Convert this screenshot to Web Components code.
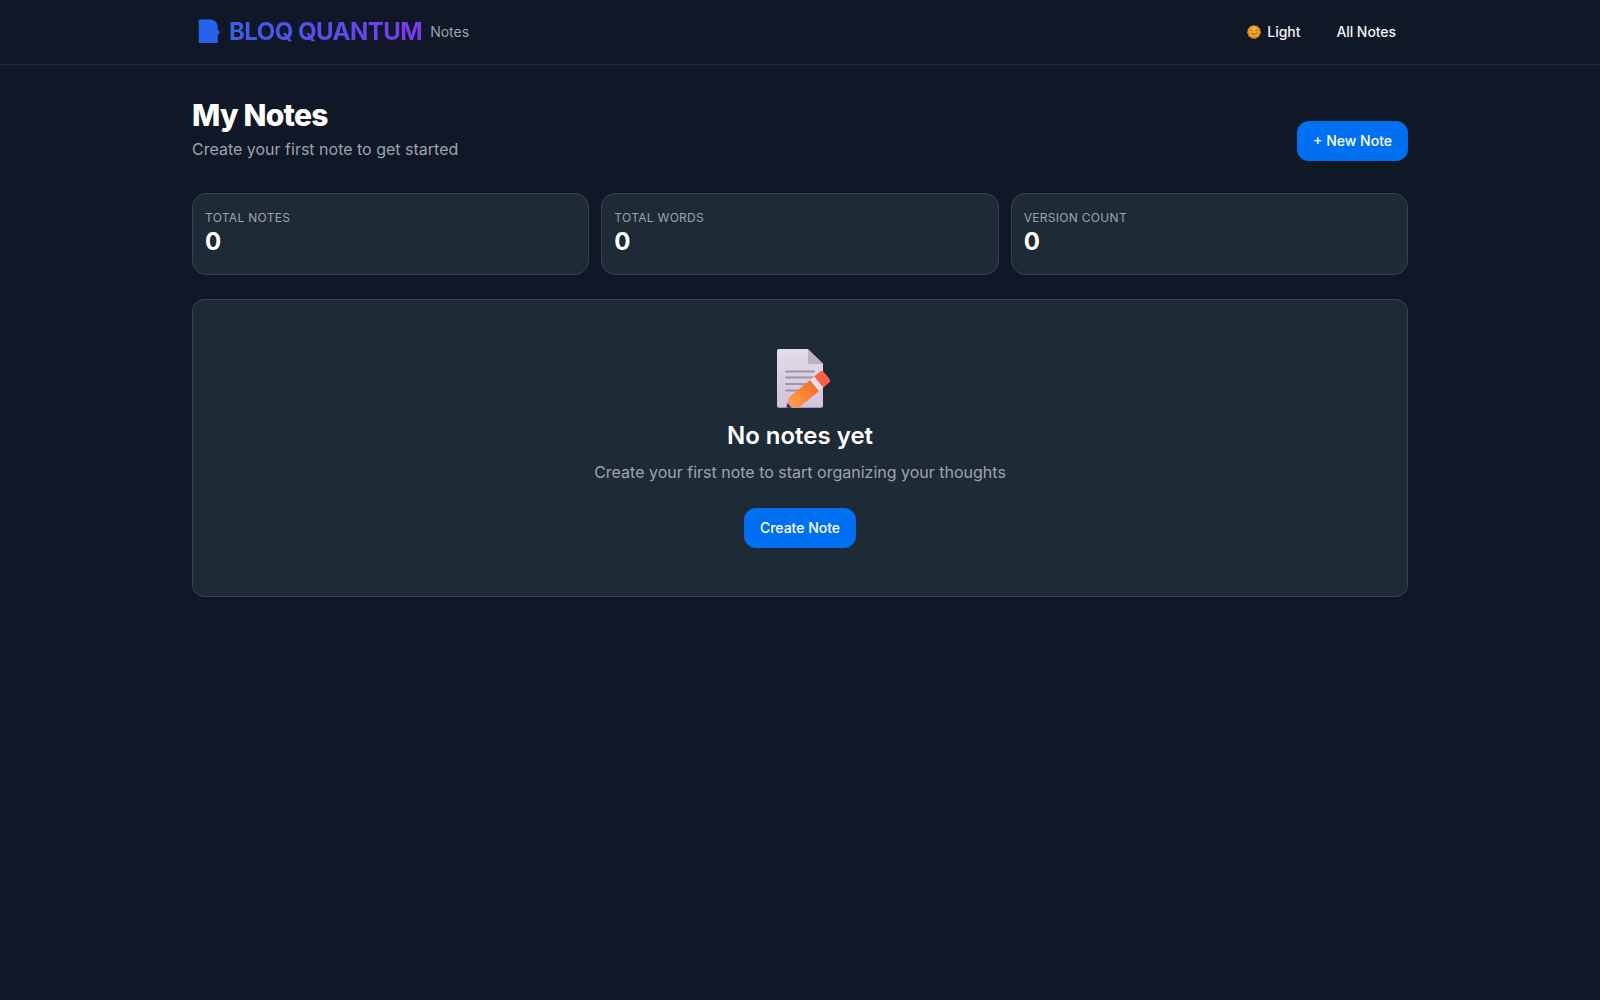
<!DOCTYPE html>
<html lang="en">
<head>
<meta charset="UTF-8">
<title>Bloq Quantum Notes</title>
<style>
    :root {
        --background: #101726;
        --card-bg: #1f2a37;
        --border: #374151;
        --muted: #9ca3af;
        --primary: #0070f3;
    }
    body {
        margin: 0;
        min-height: 100vh;
        background: var(--background);
        color: #fff;
        font-family: Inter, "Liberation Sans", sans-serif;
    }
</style>
</head>
<body>
<notes-header></notes-header>
<notes-page>
    <page-title heading="My Notes" subtitle="Create your first note to get started">
        <action-button>+ New Note</action-button>
    </page-title>
    <stat-grid>
        <stat-card label="Total Notes">0</stat-card>
        <stat-card label="Total Words">0</stat-card>
        <stat-card label="Version Count">0</stat-card>
    </stat-grid>
    <empty-state>
        <memo-icon slot="icon"></memo-icon>
        <span slot="title">No notes yet</span>
        <span slot="text">Create your first note to start organizing your thoughts</span>
        <action-button>Create Note</action-button>
    </empty-state>
</notes-page>

<script>
// Small helper so each element only has to give its markup
function define(name, render) {
    customElements.define(name, class extends HTMLElement {
        constructor() {
            super();
            this.attachShadow({ mode: 'open' });
        }
        connectedCallback() {
            this.shadowRoot.innerHTML = render(this);
        }
    });
}

// Top bar
define('notes-header', () => `
    <style>
        :host {
            display: block;
            border-bottom: 1px solid #1f2937;
        }
        .bar {
            display: flex;
            align-items: center;
            justify-content: space-between;
            box-sizing: border-box;
            max-width: 1280px;
            height: 64px;
            margin: 0 auto;
            padding: 0 32px;
        }
        .brand, nav {
            display: flex;
            align-items: center;
        }
        .brand svg {
            display: block;
            width: 24px;
            height: 26px;
            margin: 0 7px 0 6px;
        }
        .name {
            font-size: 24px;
            line-height: 32px;
            font-weight: 700;
            letter-spacing: -0.53px;
            background: linear-gradient(to right, #3b5fe8, #7c3aed);
            -webkit-background-clip: text;
            background-clip: text;
            color: transparent;
        }
        .section {
            margin-left: 8px;
            font-size: 14px;
            line-height: 20px;
            color: var(--muted);
        }
        nav {
            gap: 12px;
        }
        nav a {
            display: flex;
            align-items: center;
            gap: 6px;
            padding: 8px 12px;
            font-size: 14px;
            line-height: 20px;
            font-weight: 500;
            letter-spacing: -0.06px;
            color: #f3f4f6;
        }
        nav svg {
            display: block;
            width: 14px;
            height: 14px;
        }
    </style>
    <div class="bar">
        <div class="brand">
            <svg viewBox="0 0 24 26">
                <path d="M.8.4h13.300l3.200 2.100q2 1.700 2.400 5v2.700l2.200 3.100-2.200 3.100V24H.8z" fill="#2563eb"/>
            </svg>
            <span class="name">BLOQ QUANTUM</span>
            <span class="section">Notes</span>
        </div>
        <nav>
            <a>
                <svg viewBox="0 0 14 14">
                    <circle cx="7" cy="7" r="6.2" fill="#ee9a25" stroke="#d9831c" stroke-width="1.4" stroke-dasharray="2.4 1"/>
                    <circle cx="6.6" cy="6" r="4.2" fill="#fbb130"/>
                    <path d="M3.2 5q1.300.2 2.400.9M10.800 5q-1.300.2-2.400.9M3.900 7.900q3.100 2.800 6.200 0" fill="none" stroke="#74451c" stroke-width=".9"/>
                </svg>
                <span>Light</span>
            </a>
            <a>All Notes</a>
        </nav>
    </div>
`);

define('notes-page', () => `
    <style>
        :host {
            display: flex;
            flex-direction: column;
            box-sizing: border-box;
            max-width: 1280px;
            margin: 0 auto;
            padding: 32px;
        }
    </style>
    <slot></slot>
`);

define('page-title', (el) => `
    <style>
        :host {
            display: flex;
            align-items: flex-end;
            justify-content: space-between;
            margin-bottom: 32px;
        }
        h1 {
            margin: 0;
            font-size: 30px;
            line-height: 36px;
            font-weight: 800;
            letter-spacing: -0.75px;
        }
        p {
            margin: 4px 0 0;
            font-size: 16px;
            line-height: 24px;
            color: var(--muted);
        }
    </style>
    <div>
        <h1>${el.getAttribute('heading')}</h1>
        <p>${el.getAttribute('subtitle')}</p>
    </div>
    <slot></slot>
`);

define('action-button', () => `
    <style>
        :host {
            display: block;
        }
        button {
            display: block;
            height: 40px;
            padding: 0 16px;
            border: 0;
            border-radius: 12px;
            background: var(--primary);
            color: #fff;
            font: 500 14px/20px Inter, "Liberation Sans", sans-serif;
        }
    </style>
    <button><slot></slot></button>
`);

define('stat-grid', () => `
    <style>
        :host {
            display: grid;
            grid-template-columns: repeat(3, 1fr);
            gap: 12px;
            margin-bottom: 24px;
        }
    </style>
    <slot></slot>
`);

define('stat-card', (el) => `
    <style>
        :host {
            display: block;
            padding: 16px 12px;
            border: 1px solid var(--border);
            border-radius: 14px;
            background: var(--card-bg);
        }
        .label {
            font-size: 12px;
            line-height: 16px;
            letter-spacing: 0.3px;
            text-transform: uppercase;
            color: var(--muted);
        }
        .value {
            font-size: 24px;
            line-height: 32px;
            font-weight: 700;
        }
    </style>
    <div class="label">${el.getAttribute('label')}</div>
    <div class="value"><slot></slot></div>
`);

define('empty-state', () => `
    <style>
        :host {
            display: flex;
            flex-direction: column;
            align-items: center;
            padding: 48px;
            border: 1px solid var(--border);
            border-radius: 12px;
            background: var(--card-bg);
        }
        h2 {
            margin: 12px 0 8px;
            font-size: 24px;
            line-height: 32px;
            font-weight: 600;
        }
        p {
            margin: 0 0 24px;
            font-size: 16px;
            line-height: 24px;
            color: var(--muted);
        }
    </style>
    <slot name="icon"></slot>
    <h2><slot name="title"></slot></h2>
    <p><slot name="text"></slot></p>
    <slot></slot>
`);

// Sheet of paper with a pencil over its corner
define('memo-icon', () => `
    <style>
        :host {
            display: block;
            width: 60px;
            height: 60px;
        }
        svg {
            display: block;
        }
    </style>
    <svg width="60" height="60" viewBox="0 0 60 60">
        <defs>
            <linearGradient id="paper" x1="0" y1="0" x2="0" y2="1">
                <stop offset="0" stop-color="#e2dce8"/>
                <stop offset="1" stop-color="#d3c2dc"/>
            </linearGradient>
            <linearGradient id="wood" x1="0" y1="0" x2="1" y2="0">
                <stop offset="0" stop-color="#ff9c3f"/>
                <stop offset="1" stop-color="#f4702f"/>
            </linearGradient>
            <clipPath id="sheet"><path d="M0 0h60v59.7H0z"/></clipPath>
        </defs>
        <path d="M9 1h28.5L53 15.500V58q0 1.700-1.700 1.700H9q-2 0-2-1.700V3q0-2 2-2z" fill="url(#paper)"/>
        <path d="M38 1l15 15H40q-2 0-2-2z" fill="#b9b2c0"/>
        <path d="M16 23.400h28M16 29.600h28M16 36h24M16 42.400h16" stroke="#9c96a2" stroke-width="2" stroke-linecap="round"/>
        <g clip-path="url(#sheet)">
            <g transform="translate(16 61) rotate(-39.500) scale(1.120 1.180)">
                <path d="M0 0L8.500-6V6z" fill="#d8a184"/>
                <path d="M0 0L4.500-3.200V3.200z" fill="#4b2941"/>
                <path d="M8.500-6H33V6H8.500L7 2.500 8.500 0 7-2.500z" fill="url(#wood)"/>
                <path d="M33-6h5V6h-5z" fill="#e5dfea"/>
                <path d="M38-6h7.500q1.500 0 1.500 1.500v9Q47 6 45.500 6H38z" fill="#fb6045"/>
            </g>
        </g>
    </svg>
`);
</script>
</body>
</html>
